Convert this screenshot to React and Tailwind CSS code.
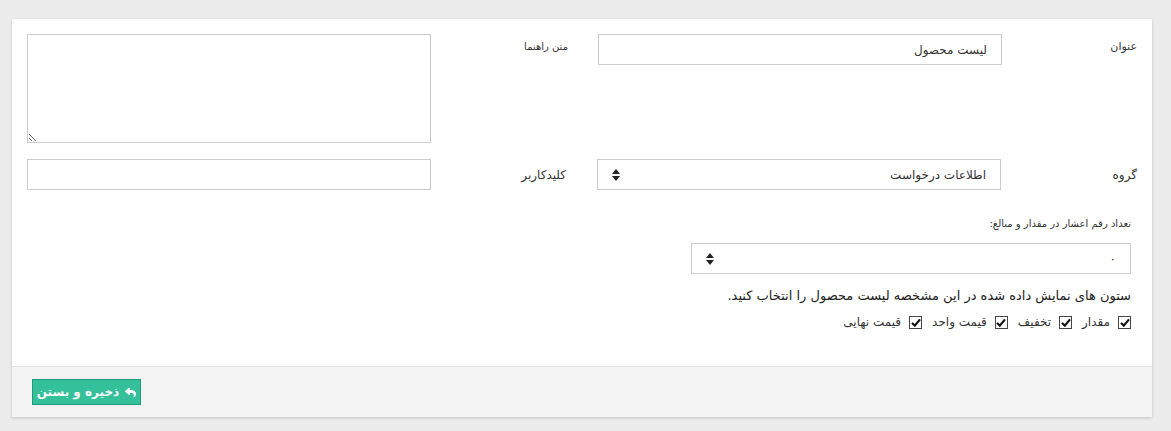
import { FaReply } from 'react-icons/fa';

const font = "font-['DejaVu_Sans','Noto_Sans',sans-serif]";

const SortIcon = () => (
  <svg width="8" height="12" viewBox="0 0 8 12" className="shrink-0">
    <path d="M4 0 L8 5 L0 5 Z" fill="#222" />
    <path d="M4 12 L8 7 L0 7 Z" fill="#222" />
  </svg>
);

const Check = ({ label }) => (
  <label className="flex items-center gap-[8px]">
    <span className="w-[13px] h-[13px] border border-[#444] flex items-center justify-center bg-white">
      <svg width="10" height="9" viewBox="0 0 10 9">
        <path d="M1 5 L3.8 7.6 L9 1.4" fill="none" stroke="#111" strokeWidth="2.2" />
      </svg>
    </span>
    <span className="text-[12px] text-[#333] ml-[10px]">{label}</span>
  </label>
);

const Select = ({ value, className }) => (
  <div className={`h-[31px] border border-[#ccc] bg-white flex items-center justify-between px-[14px] ${className}`}>
    <span className="text-[12px] text-[#333]">{value}</span>
    <SortIcon />
  </div>
);

export default function App() {
  return (
    <div className={`min-h-[431px] bg-[#ececec] pt-[19px] pl-[12px] pb-[14px] ${font}`}>
      <div dir="rtl" className="w-[1140px] bg-white shadow-[0_1px_3px_rgba(0,0,0,0.18)]">
        <div className="px-[15px] pt-[15px] pb-[35px]">
          {/* row 1 */}
          <div className="flex">
            <div className="flex w-[555px]">
              <div className="w-[136px] pt-[5px] text-[11px] text-[#333] -ml-[1px]">عنوان</div>
              <input
                readOnly
                dir="rtl"
                value="لیست محصول"
                className="w-[404px] h-[31px] border border-[#ccc] px-[14px] text-[12px] text-[#333] outline-none"
              />
            </div>
            <div className="flex w-[555px]">
              <div className="w-[151px] pr-[14px] pt-[5px] text-[10px] text-[#333]">متن راهنما</div>
              <textarea dir="rtl" className="w-[404px] h-[109px] border border-[#ccc] outline-none" />
            </div>
          </div>

          {/* row 2 */}
          <div className="flex mt-[16px]">
            <div className="flex w-[555px] items-center">
              <div className="w-[136px] text-[12px] text-[#333] pt-[1px]">گروه</div>
              <Select value="اطلاعات درخواست" className="w-[404px]" />
            </div>
            <div className="flex w-[555px] items-center">
              <div className="w-[151px] pr-[16px] text-[12px] text-[#333]">کلیدکاربر</div>
              <input readOnly className="w-[404px] h-[31px] border border-[#ccc] outline-none" />
            </div>
          </div>

          {/* row 3 */}
          <div className="w-[440px] mr-[6px] mt-[25px]">
            <div className="text-[10px] text-[#333] leading-[18px]">تعداد رقم اعشار در مقدار و مبالغ:</div>
            <Select value="۰" className="mt-[10px]" />
            <div className="mt-[12px] text-[13px] text-[#222] leading-[20px]">
              ستون های نمایش داده شده در این مشخصه لیست محصول را انتخاب کنید.
            </div>
            <div className="flex mt-[7px]">
              <Check label="مقدار" />
              <Check label="تخفیف" />
              <Check label="قیمت واحد" />
              <Check label="قیمت نهایی" />
            </div>
          </div>
        </div>

        {/* footer */}
        <div dir="ltr" className="border-t border-[#e2e2e2] bg-[#f3f3f3] h-[51px] px-[20px] pt-[12px]">
          <button className="h-[26px] w-[109px] bg-[#33c09a] border border-[#1f9c7b] text-white text-[12px] font-bold flex items-center justify-center gap-[6px]">
            <span dir="rtl">ذخیره و بستن</span>
            <FaReply size={11} />
          </button>
        </div>
      </div>
    </div>
  );
}
